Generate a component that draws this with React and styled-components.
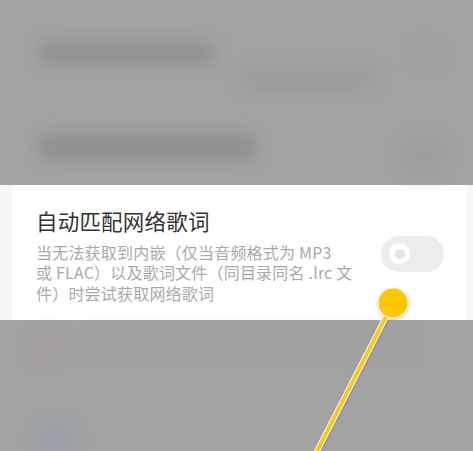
import React from 'react';
import styled, { createGlobalStyle } from 'styled-components';

const GlobalStyle = createGlobalStyle`
  html, body {
    margin: 0;
    padding: 0;
    background: #a3a3a3;
  }
  body {
    font-family: "Noto Sans CJK SC", "Noto Sans", sans-serif;
  }
`;

const Page = styled.div`
  position: relative;
  width: 473px;
  height: 451px;
  overflow: hidden;
  display: flex;
  flex-direction: column;
  background: #a3a3a3;
`;

// blurred settings list behind the dim layer
const Backdrop = styled.div`
  height: ${props => props.height}px;
  flex: none;
  overflow: hidden;
  filter: blur(9px);
`;

const BlurRow = styled.div`
  height: ${props => props.height}px;
  display: flex;
  justify-content: space-between;
  align-items: ${props => props.align || 'center'};
  padding: ${props => props.pad || '0 30px 0 40px'};
  box-sizing: border-box;
`;

const BlurText = styled.div`
  display: flex;
  flex-direction: column;
  gap: ${props => props.gap || 4}px;
`;

const Smudge = styled.div`
  width: ${props => props.w}px;
  height: ${props => props.h}px;
  margin-left: ${props => props.left || 0}px;
  border-radius: ${props => props.round || 6}px;
  background: ${props => props.color};
`;

const Panel = styled.section`
  flex: none;
  height: 135px;
  background: #f7f7f7;
  padding: 0 6px 0 12px;
  box-sizing: border-box;
`;

const Card = styled.div`
  height: 100%;
  background: #ffffff;
  display: flex;
  align-items: center;
  justify-content: space-between;
  padding: 20px 23px 16px 24px;
  box-sizing: border-box;
`;

const TextBlock = styled.div`
  display: flex;
  flex-direction: column;
`;

const Title = styled.h3`
  margin: 0;
  font-size: 21.5px;
  font-weight: 400;
  line-height: 30px;
  color: #363131;
  letter-spacing: 0.2px;
`;

const Summary = styled.p`
  margin: 6px 0 0;
  font-size: 16px;
  line-height: 20.6px;
  color: #a9a9a9;
  letter-spacing: 0.2px;
`;

const Line = styled.span`
  display: block;
  white-space: nowrap;
`;

const Switch = styled.div`
  width: 63px;
  height: 36px;
  border-radius: 18px;
  background: #ececec;
  display: flex;
  align-items: center;
  padding-left: 8px;
  box-sizing: border-box;
  margin-top: -2px;
  flex: none;
`;

const Knob = styled.div`
  width: 21px;
  height: 21px;
  border-radius: 50%;
  background: #ffffff;
  display: flex;
  align-items: center;
  justify-content: center;

  &:after {
    content: "";
    width: 10px;
    height: 10px;
    border-radius: 50%;
    background: #e4e4e4;
  }
`;

const Pointer = styled.svg`
  position: absolute;
  left: 0;
  top: 0;
  pointer-events: none;
`;

const App = () => {
  return (
    <Page>
      <GlobalStyle />
      <Backdrop height={185}>
        <BlurRow height={95} align="flex-start" pad="43px 32px 0 40px">
          <BlurText gap={3}>
            <Smudge w={173} h={20} color="#8f8d8d" />
            <Smudge w={135} h={22} left={200} color="#9a9a9a" />
          </BlurText>
          <Smudge w={28} h={22} color="#9f9f9f" />
        </BlurRow>
        <BlurRow height={90} align="flex-start" pad="40px 25px 0 40px">
          <Smudge w={215} h={24} color="#8d8b8b" />
          <Smudge w={50} h={40} round={20} color="#9d9d9d" />
        </BlurRow>
      </Backdrop>

      <Panel>
        <Card>
          <TextBlock>
            <Title>自动匹配网络歌词</Title>
            <Summary>
              <Line>当无法获取到内嵌（仅当音频格式为 MP3</Line>
              <Line>或 FLAC）以及歌词文件（同目录同名 .lrc 文</Line>
              <Line>件）时尝试获取网络歌词</Line>
            </Summary>
          </TextBlock>
          <Switch>
            <Knob />
          </Switch>
        </Card>
      </Panel>

      <Backdrop height={131}>
        <BlurRow height={60} pad="14px 60px 0 30px" align="flex-start">
          <Smudge w={30} h={30} round={8} color="#a59e9e" />
          <Smudge w={330} h={20} color="#a0a0a0" />
        </BlurRow>
        <BlurRow height={71} pad="40px 0 0 32px" align="flex-start">
          <Smudge w={48} h={40} round={20} color="#99a0a7" />
        </BlurRow>
      </Backdrop>

      <Pointer width="473" height="451" viewBox="0 0 473 451">
        <defs>
          <filter id="shade" x="-20%" y="-20%" width="140%" height="140%">
            <feDropShadow dx="0" dy="1" stdDeviation="1.2" floodColor="#000" floodOpacity="0.25" />
          </filter>
        </defs>
        <g filter="url(#shade)">
          <line x1="393" y1="303" x2="316" y2="453" stroke="#f2f2f2" strokeWidth="6" />
          <line x1="393" y1="303" x2="316" y2="453" stroke="#ffc800" strokeWidth="3.6" />
          <circle cx="393" cy="303" r="15" fill="#fec700" stroke="#eeeeee" strokeWidth="1.2" />
        </g>
      </Pointer>
    </Page>
  );
};

export default App;
